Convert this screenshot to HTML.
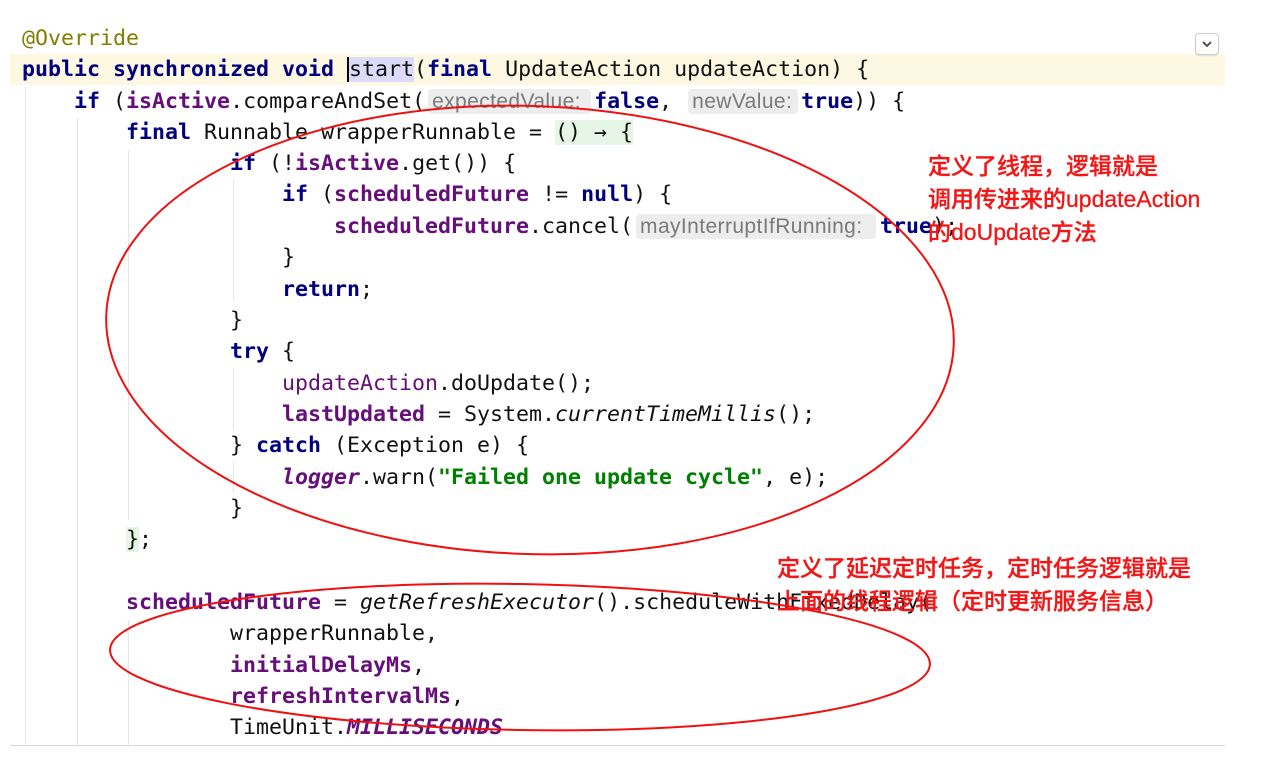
<!DOCTYPE html>
<html><head><meta charset="utf-8"><style>
body{margin:0;width:1280px;height:778px;background:#fff;position:relative;overflow:hidden}
.hl{position:absolute;left:10px;top:54px;width:1215px;height:31px;background:#fdf8e1}
.bot{position:absolute;left:10px;top:745px;width:1215px;height:1px;background:#d8d8d8}
.g{position:absolute;width:1px;background:#e6e6e6}
.ln{position:absolute;left:22px;height:31px;line-height:31px;font-family:"DejaVu Sans Mono",monospace;font-size:21.6px;color:#111;white-space:pre}
.k{color:#000080;font-weight:bold}
.f{color:#660e7a;font-weight:bold}
.fp{color:#660e7a}
.a{color:#808000}
.s{color:#008000;font-weight:bold}
.i{font-style:italic}
.h{display:inline-block;background:#ededed;color:#7a7a7a;font-family:"Liberation Sans",sans-serif;font-size:21px;letter-spacing:0.4px;border-radius:4px;height:25px;line-height:25px;vertical-align:top;margin-top:3px;padding:0 4px;box-sizing:border-box;overflow:hidden}
.lam{background:#e6f6e6}
.cur{background:#dcdcfa;border-left:2px solid #000}
.btn{position:absolute;left:1195px;top:33px;width:22px;height:20px;border:1px solid #ccc;border-radius:4px;background:#fff;box-shadow:0 1px 1px #ddd}
.ann{position:absolute;color:#f21616;font-family:"Liberation Sans","Noto Sans CJK SC",sans-serif;font-size:23px;line-height:33px;white-space:pre;font-weight:500;-webkit-text-stroke:0.3px #f21616}
</style></head><body>
<div class="hl"></div>
<div class="g" style="left:25px;top:87px;height:658px"></div>
<div class="g" style="left:77px;top:118px;height:627px"></div>
<div class="g" style="left:128px;top:150px;height:370px"></div>
<div class="g" style="left:128px;top:620px;height:125px"></div>
<div class="g" style="left:233px;top:180px;height:120px"></div>
<div class="g" style="left:233px;top:368px;height:62px"></div>
<div class="g" style="left:233px;top:462px;height:30px"></div>
<div class="bot"></div>
<div class="btn"><svg width="22" height="20" viewBox="0 0 22 20"><path d="M7 8l4 4 4-4" fill="none" stroke="#555" stroke-width="2"/></svg></div>

<div class="ln" style="top:23px"><span class="a">@Override</span></div>
<div class="ln" style="top:54px"><span class="k">public synchronized void </span><span class="cur">start</span>(<span class="k">final</span> UpdateAction updateAction) {</div>
<div class="ln" style="top:86px">    <span class="k">if</span> (<span class="f">isActive</span>.compareAndSet(<span class="h" style="width:163px;margin-left:3px;margin-right:3px">expectedValue:</span><span class="k">false</span>, <span class="h" style="width:110px;margin-left:3px;margin-right:3px">newValue:</span><span class="k">true</span>)) {</div>
<div class="ln" style="top:117px">        <span class="k">final</span> Runnable wrapperRunnable = <span class="lam">() → {</span></div>
<div class="ln" style="top:148px">                <span class="k">if</span> (!<span class="f">isActive</span>.get()) {</div>
<div class="ln" style="top:179px">                    <span class="k">if</span> (<span class="f">scheduledFuture</span> != <span class="k">null</span>) {</div>
<div class="ln" style="top:211px">                        <span class="f">scheduledFuture</span>.cancel(<span class="h" style="width:240px;margin-left:3px;margin-right:4px">mayInterruptIfRunning:</span><span class="k">true</span>);</div>
<div class="ln" style="top:242px">                    }</div>
<div class="ln" style="top:274px">                    <span class="k">return</span>;</div>
<div class="ln" style="top:305px">                }</div>
<div class="ln" style="top:336px">                <span class="k">try</span> {</div>
<div class="ln" style="top:368px">                    <span class="fp">updateAction</span>.doUpdate();</div>
<div class="ln" style="top:399px">                    <span class="f">lastUpdated</span> = System.<span class="i">currentTimeMillis</span>();</div>
<div class="ln" style="top:430px">                } <span class="k">catch</span> (Exception e) {</div>
<div class="ln" style="top:462px">                    <span class="f i">logger</span>.warn(<span class="s">"Failed one update cycle"</span>, e);</div>
<div class="ln" style="top:493px">                }</div>
<div class="ln" style="top:524px">        <span class="lam">}</span>;</div>
<div class="ln" style="top:587px">        <span class="f">scheduledFuture</span> = <span class="i">getRefreshExecutor</span>().scheduleWithFixedDelay(</div>
<div class="ln" style="top:618px">                wrapperRunnable,</div>
<div class="ln" style="top:650px">                <span class="f">initialDelayMs</span>,</div>
<div class="ln" style="top:681px">                <span class="f">refreshIntervalMs</span>,</div>
<div class="ln" style="top:712px">                TimeUnit.<span class="f i">MILLISECONDS</span></div>

<svg style="position:absolute;left:0;top:0" width="1280" height="778">
<ellipse cx="530" cy="330" rx="424" ry="224" transform="rotate(2 530 330)" fill="none" stroke="#f01010" stroke-width="2"/>
<ellipse cx="520" cy="657" rx="410" ry="73" transform="rotate(1 520 657)" fill="none" stroke="#f01010" stroke-width="2"/>
</svg>
<div class="ann" style="left:928px;top:150px">定义了线程，逻辑就是
调用传进来的updateAction
的doUpdate方法</div>
<div class="ann" style="left:777px;top:552px">定义了延迟定时任务，定时任务逻辑就是
上面的线程逻辑（定时更新服务信息）</div>
</body></html>
